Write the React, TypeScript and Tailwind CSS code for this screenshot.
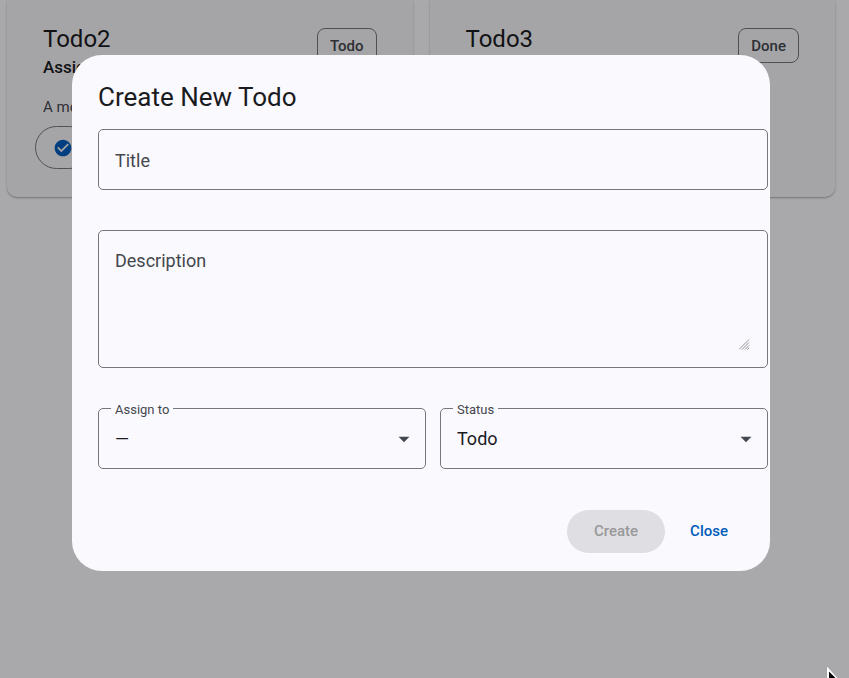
import { useState } from "react";
import type { ReactNode } from "react";
import { MdArrowDropDown, MdCheckCircle } from "react-icons/md";

type Todo = {
  title: string;
  status: string;
  summary: string;
};

const todos: Todo[] = [
  { title: "Todo2", status: "Todo", summary: "A more" },
  { title: "Todo3", status: "Done", summary: "" },
];

function TodoCard({ todo }: { todo: Todo }) {
  return (
    <article className="rounded-b-[10px] bg-[#f4f3f6] px-9 pt-6 pb-7 shadow-[0_1px_3px_rgba(0,0,0,0.2),0_1px_1px_rgba(0,0,0,0.14)]">
      <header className="flex items-start justify-between">
        <div>
          <h2 className="text-2xl leading-[30px] text-[#1a1b1f]">{todo.title}</h2>
          <p className="text-[17px] leading-[26px] font-medium text-[#1a1b1f]">Assign</p>
        </div>
        <span className="mt-1 flex h-[35px] items-center rounded-lg border border-[#74777f] px-3 pt-px text-[15px] font-medium text-[#44474e]">
          {todo.status}
        </span>
      </header>
      <p className="mt-4 min-h-[22px] text-[15px] leading-[22px] text-[#44474e]">{todo.summary}</p>
      <div className="-ml-2 pt-2">
        <button
          type="button"
          aria-label={`Complete ${todo.title}`}
          className="flex h-[43px] items-center rounded-full border border-[#74777f] px-[17px]"
        >
          <MdCheckCircle className="size-5 text-[#005cbb]" />
        </button>
      </div>
    </article>
  );
}

const floatingLabel =
  "pointer-events-none absolute left-3 px-1 text-[#44474e] peer-not-placeholder-shown:-top-2 peer-not-placeholder-shown:bg-[#faf9fd] peer-not-placeholder-shown:text-[13px] peer-not-placeholder-shown:leading-4";

function SelectField({
  id,
  label,
  value,
  onChange,
  children,
}: {
  id: string;
  label: string;
  value: string;
  onChange: (value: string) => void;
  children: ReactNode;
}) {
  return (
    <div className="relative min-w-0 flex-1">
      <select
        id={id}
        value={value}
        onChange={(event) => onChange(event.target.value)}
        className="block h-[61px] w-full appearance-none rounded-[5px] border border-[#74777f] bg-transparent px-4 text-lg text-[#1a1b1f] outline-none"
      >
        {children}
      </select>
      <label
        htmlFor={id}
        className="absolute -top-2 left-[13px] bg-[#faf9fd] px-1 text-[13px] leading-5 text-[#44474e]"
      >
        {label}
      </label>
      <MdArrowDropDown className="pointer-events-none absolute top-[18px] right-[9px] size-[26px] text-[#44474e]" />
    </div>
  );
}

function CreateTodoDialog() {
  const [title, setTitle] = useState("");
  const [description, setDescription] = useState("");
  const [assignee, setAssignee] = useState("none");
  const [status, setStatus] = useState("todo");

  return (
    <form
      role="dialog"
      aria-modal="true"
      aria-labelledby="dialog-title"
      className="w-full rounded-[30px] bg-[#faf9fd] pt-6 pb-[18px]"
    >
      <h1 id="dialog-title" className="px-[26px] text-[26px] leading-9 text-[#1a1b1f]">
        Create New Todo
      </h1>
      <div className="mt-3.5 flex flex-col gap-10 pr-0.5 pl-[26px]">
        <div className="relative">
          <input
            id="title"
            type="text"
            placeholder=" "
            value={title}
            onChange={(event) => setTitle(event.target.value)}
            className="peer block h-[61px] w-full rounded-[5px] border border-[#74777f] bg-transparent px-4 text-lg text-[#1a1b1f] outline-none"
          />
          <label htmlFor="title" className={`${floatingLabel} top-[18px] ml-px text-lg leading-7`}>
            Title
          </label>
        </div>
        <div className="relative rounded-[5px] border border-[#74777f] p-4">
          <textarea
            id="description"
            rows={4}
            placeholder=" "
            value={description}
            onChange={(event) => setDescription(event.target.value)}
            className="peer block w-full resize-y bg-transparent text-lg leading-[26px] text-[#1a1b1f] outline-none"
          />
          <label htmlFor="description" className={`${floatingLabel} top-4 text-lg leading-7`}>
            Description
          </label>
          <svg
            aria-hidden="true"
            viewBox="0 0 12 12"
            className="pointer-events-none absolute right-4 bottom-4 size-3 bg-[#faf9fd]"
          >
            <path
              d="M0 10.5L10 0.5M3 10.5L10 3.5M6 10.5L10 6.5M8.5 10.5L10 9"
              fill="none"
              stroke="#8f8f92"
              strokeWidth="1"
            />
          </svg>
        </div>
        <div className="flex gap-3.5">
          <SelectField id="assignee" label="Assign to" value={assignee} onChange={setAssignee}>
            <option value="none">—</option>
          </SelectField>
          <SelectField id="status" label="Status" value={status} onChange={setStatus}>
            <option value="todo">Todo</option>
            <option value="done">Done</option>
          </SelectField>
        </div>
      </div>
      <div className="mt-[41px] flex justify-end gap-3 pr-[29px] text-[15px] font-medium">
        <button
          type="submit"
          disabled
          className="h-[43px] rounded-full bg-[#dfdee2] px-[27px] text-[#98989b]"
        >
          Create
        </button>
        <button type="button" className="h-[43px] rounded-full px-[13px] text-[#005cbb]">
          Close
        </button>
      </div>
    </form>
  );
}

export default function App() {
  return (
    <div className="min-h-screen bg-[#faf9fd] font-['Roboto',sans-serif]">
      <main className="grid grid-cols-2 gap-[17px] pr-3.5 pl-[7px]">
        {todos.map((todo) => (
          <TodoCard key={todo.title} todo={todo} />
        ))}
      </main>
      <div className="fixed inset-0 flex items-start bg-black/32 pt-[55px] pr-[79px] pl-[72px]">
        <CreateTodoDialog />
        <svg
          aria-hidden="true"
          viewBox="0 0 22 11"
          className="absolute right-0 bottom-0 h-[11px] w-[22px]"
        >
          <path d="M-0.5 -1V14H13Z" fill="#fff" />
          <path d="M2 4.5V11H8.5Z" fill="#000" />
        </svg>
      </div>
    </div>
  );
}
